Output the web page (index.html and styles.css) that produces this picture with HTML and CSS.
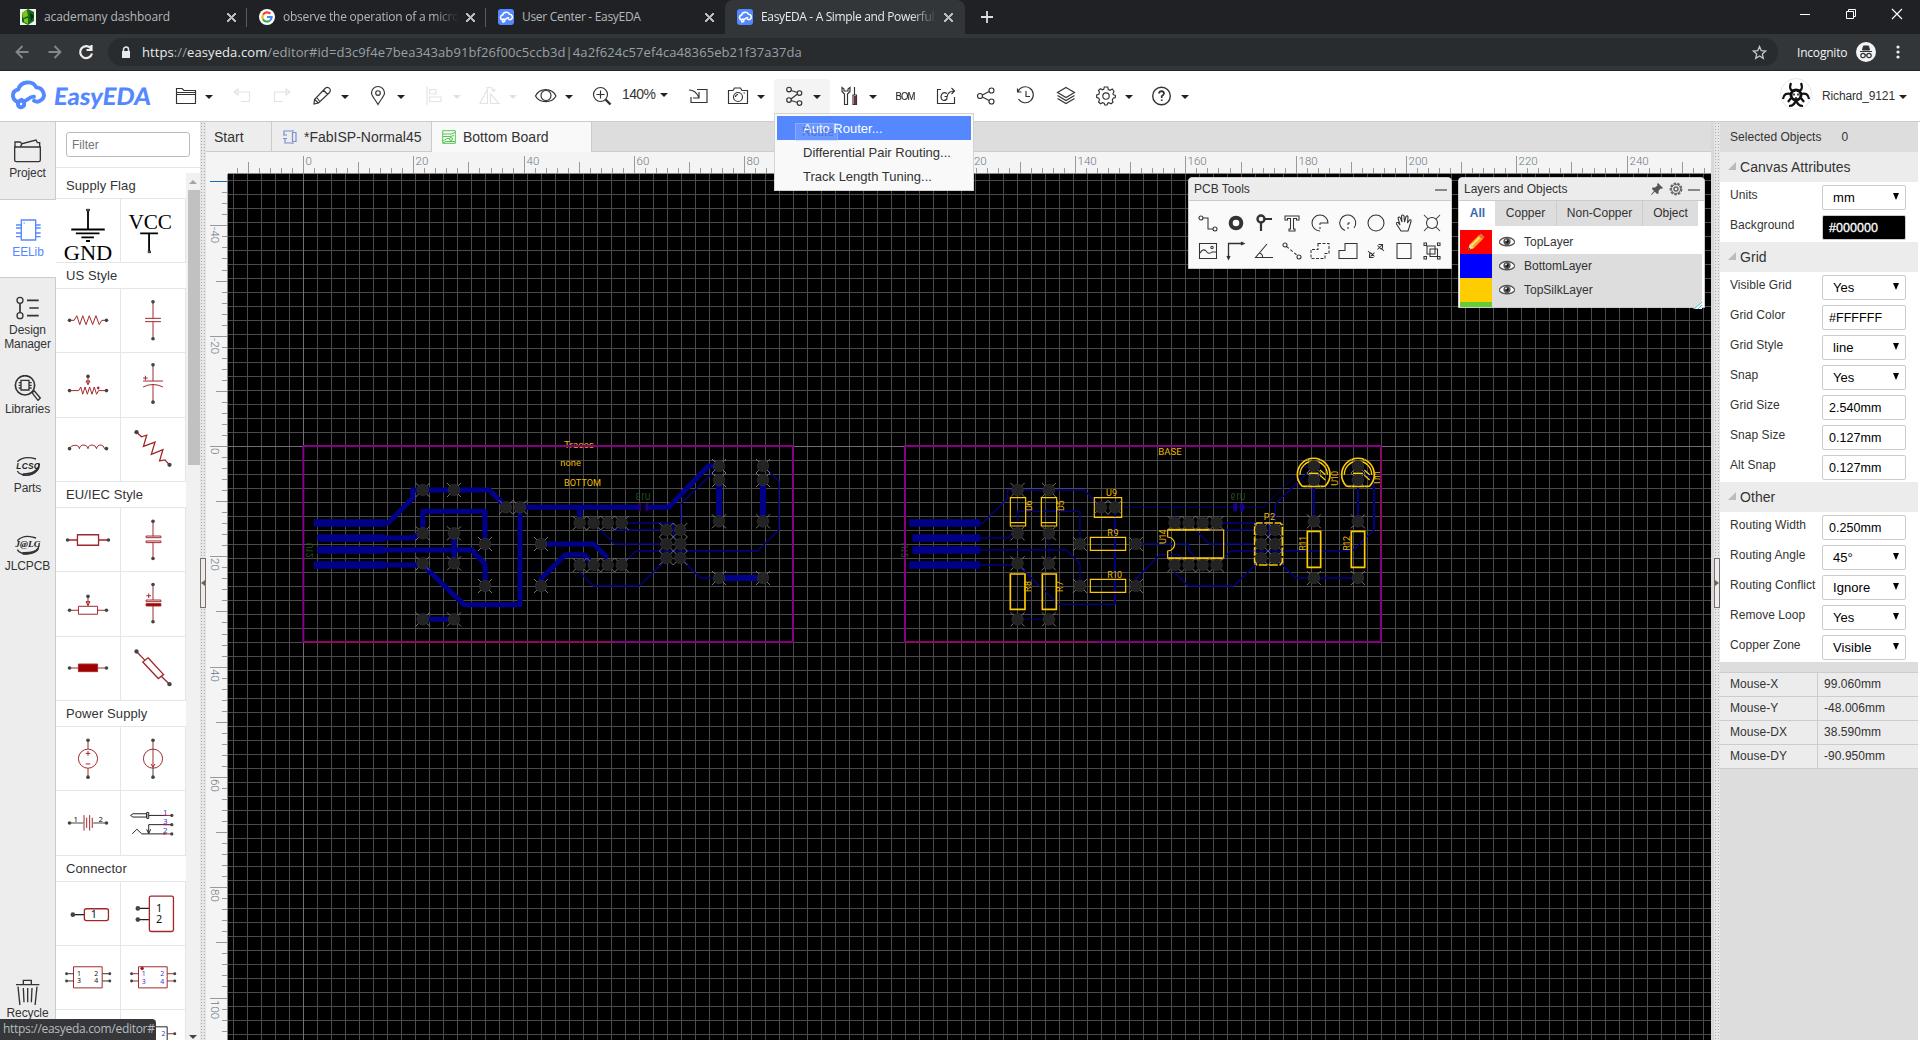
FILE: index.html
```html
<!DOCTYPE html>
<html lang="en">
<head>
<meta charset="utf-8">
<title>EasyEDA - A Simple and Powerful</title>
<link rel="stylesheet" href="styles.css">
</head>
<body>
<svg class="defs" width="0" height="0" aria-hidden="true">
  <defs>
    <g id="pad"><path d="M-21-21 21 21M21-21-21 21" stroke="#777" stroke-width="3"/><circle r="17.500" fill="#232323" stroke="#3a3a3a" stroke-width="1.500"/></g>
    <g id="cloud" fill="none" stroke-linecap="round" stroke-linejoin="round"><path d="M10 22C4 21 2 12 10 10C12 2 24 1 27 8C34 8 37 17 32 20C30 22 27 22 25 21M13 20C7 23 10 28 13 27C17 26 16 21 13 21M15 21C18 22 21 16 25 17"/></g>
    <symbol id="eye" viewBox="0 0 16 12"><path d="M0 6C3 0 13 0 16 6C13 11 3 11 0 6Z" fill="#fff" stroke="#555" stroke-width="1.3"/><circle cx="8" cy="5.6" r="3.6" fill="#555"/><circle cx="8" cy="5.6" r="1.5" fill="#111"/><circle cx="7" cy="4.4" r=".9" fill="#fff"/></symbol>
  </defs>
</svg>

<div class="tabstrip">
  <div class="btab"><svg class="fav" viewBox="0 0 16 16"><path d="M0 0H16V16H0Z" fill="#eef3e8"/><path d="M8 0 14 3V12L8 16 2 13V4Z" fill="#176b1e"/><path d="M2 4 7 1 8 7 3 9ZM4 10 8 9V15L4 13Z" fill="#7fc31c"/><path d="M10 4 14 7 11 12Z" fill="#062b10"/></svg><span class="ttl">academany dashboard</span><i class="x"></i></div>
  <div class="btab"><svg class="fav" viewBox="0 0 16 16"><circle cx="8" cy="8" r="8" fill="#fff"/><g fill="none" stroke-width="2.2"><path d="M11.4 4.8A4.6 4.6 0 0 0 4 5.8" stroke="#ea4335"/><path d="M4 5.8A4.6 4.6 0 0 0 4 10.2" stroke="#fbbc05"/><path d="M4 10.2A4.6 4.6 0 0 0 11 11.5" stroke="#34a853"/><path d="M11 11.5A4.6 4.6 0 0 0 12.6 8H8" stroke="#4285f4"/></g></svg><span class="ttl t2">observe the operation of a micro</span><i class="x"></i></div>
  <div class="btab nosep"><svg class="fav" viewBox="0 0 16 16"><rect width="16" height="16" rx="3" fill="#5588ff"/><g transform="translate(.6 2) scale(.4)" stroke="#fff" stroke-width="4"><use href="#cloud"/></g></svg><span class="ttl t3">User Center - EasyEDA</span><i class="x"></i></div>
  <div class="btab active"><svg class="fav" viewBox="0 0 16 16"><rect width="16" height="16" rx="3" fill="#5588ff"/><g transform="translate(.6 2) scale(.4)" stroke="#fff" stroke-width="4"><use href="#cloud"/></g></svg><span class="ttl t4">EasyEDA - A Simple and Powerful</span><i class="x"></i></div>
  <svg class="plus" viewBox="0 0 14 14"><path d="M7 1V13M1 7H13" stroke="#ddd" stroke-width="1.8"/></svg>
  <div class="wctl">
    <svg viewBox="0 0 12 12"><path d="M1 6.5H11" stroke="#fff"/></svg>
    <svg viewBox="0 0 12 12"><path d="M1.5 3.5H8.5V10.5H1.5ZM3.5 3.5V1.5H10.5V8.5H8.5" fill="none" stroke="#fff"/></svg>
    <svg viewBox="0 0 12 12"><path d="M1 1 11 11M11 1 1 11" stroke="#fff" stroke-width="1.2"/></svg>
  </div>
</div>
<div class="navbar">
  <svg class="navico" width="92" height="20" viewBox="0 0 92 20"><g fill="none" stroke-width="1.8"><path d="M13 10H1M7 4 1 10 7 16" stroke="#85888b"/><path d="M33 10H45M39 4 45 10 39 16" stroke="#85888b"/><path d="M75.500 6.500A6 6 0 1 0 76.500 11.500M76 3V8H71" stroke="#eee" stroke-width="2.200"/></g></svg>
  <div class="omni"><svg width="10" height="13" viewBox="0 0 10 13"><path d="M1 5H9V12H1Z" fill="#e8eaed"/><path d="M2.500 6V3.500A2.500 2.500 0 0 1 7.500 3.500V6" fill="none" stroke="#e8eaed" stroke-width="1.500"/></svg><span class="url"><b>https</b>://<b>easyeda.com</b>/editor#id=d3c9f4e7bea343ab91bf26f00c5ccb3d|4a2f624c57ef4ca48365eb21f37a37da</span>
  <svg class="star" width="15" height="15" viewBox="0 0 15 15"><path d="M7.500 1.500 9.200 5.600 13.700 6 10.300 8.900 11.300 13.300 7.500 11 3.700 13.300 4.700 8.900 1.300 6 5.800 5.600Z" fill="none" stroke="#c4c7ca" stroke-width="1.300"/></svg></div>
  <span class="incog">Incognito</span>
  <svg class="incico" width="20" height="20" viewBox="0 0 20 20"><circle cx="10" cy="10" r="10" fill="#f1f3f4"/><path d="M4 9.500H16M6.500 8 7.500 4H12.500L13.500 8Z" fill="#333" stroke="#333"/><g fill="none" stroke="#333" stroke-width="1.200"><circle cx="7" cy="13.500" r="2.200"/><circle cx="13" cy="13.500" r="2.200"/><path d="M9 13H11"/></g></svg>
  <svg class="dots" width="4" height="14" viewBox="0 0 4 14" fill="#eee"><circle cx="2" cy="2" r="1.600"/><circle cx="2" cy="7" r="1.600"/><circle cx="2" cy="12" r="1.600"/></svg>
</div>

<header class="top">
  <svg class="logo" width="166" height="50" viewBox="0 0 166 50"><g transform="translate(8 8) scale(1.04 1.04)" stroke="#5588ff" stroke-width="3.700"><use href="#cloud"/></g><text transform="translate(53 34) skewX(-7)" textLength="97" lengthAdjust="spacingAndGlyphs" class="logotext">EasyEDA</text></svg>
  <div class="tb drop"><svg viewBox="0 0 24 24"><path d="M2.500 19V4.500H8L10 6.500H21.500V19.500H2.500ZM2.500 8.500H21.500M2.500 10.500H21.500"/></svg></div>
  <div class="tb off"><svg viewBox="0 0 24 24"><path d="M4 8H19.500V17.500H11M8 5V11L4 8Z"/></svg></div>
  <div class="tb off"><svg viewBox="0 0 24 24"><path d="M20 8H4.500V17.500H13M16 5V11L20 8Z"/></svg></div>
  <div class="tb drop"><svg viewBox="0 0 24 24"><path d="M4 20 4.500 15.500 15.500 4Q18 2.500 20 5Q21 7 19.500 8.500L8.500 19ZM13.500 6 17.500 10.500M4.500 15.500 8.500 19M7 14 9.500 17"/></svg></div>
  <div class="tb drop"><svg viewBox="0 0 24 24"><path d="M12 20.500C9 15 5.500 12 5.500 9A6.500 6.500 0 0 1 18.500 9C18.500 12 15 15 12 20.500Z"/><circle cx="12" cy="9" r="2.300"/></svg></div>
  <div class="tb drop off"><svg viewBox="0 0 24 24"><path d="M5 2.500V21M7.500 5.500H14V10H7.500ZM7.500 13H19V17.500H7.500Z"/></svg></div>
  <div class="tb drop off"><svg viewBox="0 0 24 24"><path d="M2 19.500H9.500V5ZM12.500 10 21 19.500H12.500ZM8 4Q14 2 16 7M13.500 6 16 7.500 17.500 5"/></svg></div>
  <div class="tb drop"><svg viewBox="0 0 24 24"><path d="M1.500 12C5.500 3.500 18 3.500 22 12C18 19.500 5.500 19.500 1.500 12Z"/><circle cx="12" cy="11.500" r="5"/></svg></div>
  <div class="tb"><svg viewBox="0 0 24 24"><circle cx="10.500" cy="10.500" r="7"/><path d="M10.500 6.500V14.500M6.500 10.500H14.500"/><path d="M15.500 15.500 20.500 20.500" stroke-width="2.400"/></svg></div>
  <div class="zoom">140%<i class="car"></i></div>
  <div class="tb"><svg viewBox="0 0 24 24"><path d="M11 5.500H21V18.500H5V13M3 6Q10 6 13 14M13 8V14H7"/></svg></div>
  <div class="tb drop"><svg viewBox="0 0 24 24"><path d="M2.500 6.500H7L8.500 4H14.500L16 6.500H21.500V19.500H2.500Z"/><circle cx="12" cy="13" r="4.500"/><path d="M9.500 13A2.500 2.500 0 0 1 12 10.500M17.500 9H19"/></svg></div>
  <div class="tb drop on"><svg viewBox="0 0 24 24"><circle cx="7" cy="5.500" r="2.300"/><circle cx="7" cy="16" r="2.300"/><circle cx="17.500" cy="9" r="2.300"/><circle cx="17.500" cy="19" r="2.300"/><path d="M9 6.500 15.500 8.500M15.500 10 9 15M9 16.500 15.500 18.500"/></svg></div>
  <div class="tb drop"><svg viewBox="0 0 24 24"><path d="M4 3.500V7.500L6.500 10V20.500H9.500V10L12 7.500V3.500L10 5V7H6V5ZM16.500 3V11M15 11H18.500V20.500H15Z"/><path d="M17 12V20" stroke="#703040" stroke-width="2"/></svg></div>
  <div class="tb"><span class="bom">BOM</span></div>
  <div class="tb"><svg viewBox="0 0 24 24"><path d="M7 5.500H3.500V19.500H20.500V13M13 13Q14 7 20 7M17.500 4 20.500 7 17.500 10M13 9.500Q9.500 7.500 7.500 10.500Q6 15 9.500 16.500Q13.500 16.500 13 12.500H10.500"/></svg></div>
  <div class="tb"><svg viewBox="0 0 24 24"><circle cx="6" cy="12" r="2.500"/><circle cx="17.500" cy="6.500" r="2.500"/><circle cx="17.500" cy="17.500" r="2.500"/><path d="M8.500 11 15 7.500M8.500 13 15 16.500"/></svg></div>
  <div class="tb"><svg viewBox="0 0 24 24"><path d="M4 7.500A8 8 0 1 1 4.500 15M3.500 4.500V8H7.500M12 7V12.500H16"/></svg></div>
  <div class="tb"><svg viewBox="0 0 24 24"><path d="M12 3.500 20.500 8.500 12 13.500 3.500 8.500ZM3.500 11.500 12 16.500 20.500 11.500M3.500 14.500 12 19.500 20.500 14.500"/></svg></div>
  <div class="tb drop"><svg viewBox="0 0 24 24"><circle cx="12" cy="12" r="3.200"/><path d="M10.300 3H13.700L14.300 5.500 16 6.300 18.300 5 20 7.500 19 9.500 19.300 10.700 21.300 11.500V13.500L19.200 14.200 18.300 16 19 18.300 17 19.800 14.800 18.700 13.700 19.200 13 21H10.800L10.200 19.200 8.500 18.600 6.500 19.800 4.500 18 5.500 15.800 4.800 14.200 2.700 13.500V11L4.800 10.300 5.500 8.500 4.500 6.500 6.500 4.700 8.500 5.800 9.700 5.300Z"/></svg></div>
  <div class="tb drop"><svg viewBox="0 0 24 24"><circle cx="11.500" cy="12" r="8.800" stroke-width="1.400"/><path d="M9 9.500Q9.200 7.200 11.700 7.200Q14 7.500 14 9.500Q13.500 11 11.700 12.300V14M11.700 15.500V17" stroke-width="1.700"/></svg></div>
  <div class="user"><svg width="32" height="32" viewBox="0 0 32 32"><circle cx="16" cy="16" r="15.500" fill="#fff" stroke="#e8e8e8"/><g fill="none" stroke="#111" stroke-width="2.200"><circle cx="16" cy="17" r="5" stroke-width="3"/><path d="M11 5Q8 13 15 13M21 5Q24 13 17 13M3 21Q4 14 11 16M29 21Q28 14 21 16M9 28Q15 28 16 21M23 28Q17 28 16 21M11 20 8 24M21 20 24 24"/></g><path d="M14 15.500V17.500M18 15.500V17.500M16 19V21" stroke="#111" stroke-width="1.500"/></svg><span>Richard_9121</span><i class="car"></i></div>
  <div class="menu"><div class="mi hot">Auto Router...<span class="ghost">Route</span></div><div class="mi">Differential Pair Routing...</div><div class="mi">Track Length Tuning...</div></div>
</header>

<main class="work">
  <nav class="side">
    <div class="ni first"><svg viewBox="0 90 168 78"><g class="k"><path d="M44 114H121V153Q121 158 116 158H49Q44 158 44 153ZM45 113V99H60L66 104 108 93 112 101H119V113M66 104 62 112"/></g></svg><span>Project</span></div>
    <div class="ni sel"><svg viewBox="0 324 168 78"><g class="k blue"><path d="M64 330H107V390H64ZM48 345H62M48 354H62M48 369H62M48 380H62M109 345H122M109 354H122M109 369H122M109 380H122"/><path d="M71 339H74"/></g></svg><span>EELib</span></div>
    <div class="ni"><svg viewBox="0 560 168 78"><g class="k"><circle cx="60" cy="573" r="9"/><circle cx="60" cy="619" r="9"/><path d="M60 583V609M81 573H116M88 596H116M81 619H116" stroke-width="5"/></g></svg><span>Design<br>Manager</span></div>
    <div class="ni"><svg viewBox="0 795 168 78"><g class="k"><circle cx="75" cy="826" r="29" stroke-width="5"/><path d="M63 811H87V840H63ZM56 818H63M56 826H63M56 834H63M87 818H95M87 826H95M87 834H95"/><path d="M96 848 103 843 121 864 114 871Z"/></g></svg><span>Libraries</span></div>
    <div class="ni"><svg viewBox="0 1032 168 78"><g class="k"><path d="M52 1055Q72 1036 108 1047M52 1083Q60 1097 85 1095Q120 1088 117 1060" /><path d="M70 1096Q112 1098 118 1062Q112 1092 70 1092Z" stroke-width="4"/></g><text x="84" y="1077" class="lg" textLength="70">LCSC</text></svg><span>Parts</span></div>
    <div class="ni"><svg viewBox="0 1267 168 78"><g class="k"><path d="M52 1293Q72 1272 108 1285M52 1320Q60 1334 85 1332Q118 1326 118 1300"/><path d="M70 1333Q108 1335 116 1316Q104 1330 70 1329Z" stroke-width="4"/></g><text x="83" y="1313" class="lg ser" textLength="74" lengthAdjust="spacingAndGlyphs">J@LC</text></svg><span>JLCPCB</span></div>
    <div class="ni last"><svg viewBox="0 1195 168 78"><g class="k" stroke-width="5"><path d="M48 1212H118M70 1211V1199H94V1211M54 1218 60 1276H105L111 1218M70 1222 72 1265M83 1222V1265M96 1222 94 1265"/></g></svg><span>Recycle</span></div>
  </nav>

  <section class="lib">
    <div class="filter"><div class="inp">Filter</div></div>
    <div class="scroll">
      <div class="list">
        <h4>Supply Flag</h4>
        <div class="cells">
          <svg viewBox="168 267 192 192"><path d="M264 300V360M213 360H315M227 372H299M244 384H282M258 395H270" stroke="#000" stroke-width="5.500"/><path d="M258 297H270V304H258Z" fill="#444"/><text x="190" y="452" textLength="148" lengthAdjust="spacingAndGlyphs" class="ser" font-size="64">GND</text></svg>
          <svg viewBox="363 267 192 192"><text x="384" y="357" textLength="133" lengthAdjust="spacingAndGlyphs" class="ser" font-size="62">VCC</text><path d="M420 372H474M447 372V430" stroke="#000" stroke-width="5.500"/><path d="M443 424H453V432H443Z" fill="#444"/></svg>
        </div>
        <h4>US Style</h4>
        <div class="cells c3">
          <svg viewBox="168 541 192 192"><g class="r"><path d="M208 636H222L230 622 239 649 248 622 258 649 268 622 278 649 288 622 298 649 306 636H320"/></g><g class="d"><circle cx="208" cy="636" r="5.500"/><circle cx="320" cy="636" r="5.500"/></g></svg>
          <svg viewBox="363 541 192 192"><g class="r"><path d="M459 580V630M435 630H483M435 640H483M459 640V692"/></g><g class="d"><circle cx="459" cy="580" r="5.500"/><circle cx="459" cy="692" r="5.500"/></g></svg>
          <svg viewBox="168 735 192 192"><g class="r"><path d="M208 849H236L242 838 248 860 255 838 262 860 269 838 276 860 283 838 290 860 296 849H320M264 806V830M258 820 264 831 270 820Z"/><circle cx="295" cy="841" r="3" fill="#e00"/></g><g class="d"><circle cx="208" cy="849" r="5.500"/><circle cx="320" cy="849" r="5.500"/><circle cx="264" cy="806" r="5.500"/></g></svg>
          <svg viewBox="363 735 192 192"><g class="r"><path d="M459 771V820M429 820H489M429 838Q459 823 489 838M459 832V884M429 811H443M436 804V818"/></g><g class="d"><circle cx="459" cy="771" r="5.500"/><circle cx="459" cy="884" r="5.500"/></g></svg>
          <svg viewBox="168 927 192 192"><g class="r"><path d="M208 1020Q213 1010 222 1010Q236 1008 238 1020Q240 1008 252 1009Q262 1010 264 1020Q266 1008 278 1009Q288 1010 290 1020Q292 1008 304 1009Q312 1010 314 1020H320"/></g><g class="d"><circle cx="208" cy="1020" r="5.500"/><circle cx="320" cy="1020" r="5.500"/></g></svg>
          <svg viewBox="363 927 192 192"><g class="r"><path stroke-width="4" d="M409 970 424 984 440 979 430 1013 465 1000 454 1037 489 1023 479 1057 495 1054 509 1069"/></g><g class="d"><circle cx="409" cy="970" r="6.500"/><circle cx="509" cy="1069" r="6.500"/></g></svg>
        </div>
        <h4>EU/IEC Style</h4>
        <div class="cells c3">
          <svg viewBox="168 1196 192 192"><g class="r"><path d="M202 1293H232M232 1277H296V1309H232ZM296 1293H326" stroke-width="4"/></g><g class="d"><circle cx="202" cy="1293" r="5.500"/><circle cx="326" cy="1293" r="5.500"/></g></svg>
          <svg viewBox="363 1196 192 192"><g class="r"><path d="M459 1236V1282M438 1281H483V1286H438ZM438 1296H483V1301H438ZM459 1300V1349"/></g><g class="d"><circle cx="459" cy="1236" r="5.500"/><circle cx="459" cy="1349" r="5.500"/></g></svg>
          <svg viewBox="168 -20 192 192"><g class="r"><path d="M208 96H235M235 84H293V108H235ZM293 96H320" /><path d="M264 54V82M258 70 264 82 270 70Z"/></g><g class="d"><circle cx="208" cy="96" r="5.500"/><circle cx="320" cy="96" r="5.500"/><circle cx="264" cy="54" r="5.500"/></g></svg>
          <svg viewBox="363 -20 192 192"><g class="r"><path d="M459 18V65M438 65H483V70H438ZM459 82V131M439 52H453M446 45V59"/><path d="M438 76H483V83H438Z" fill="#a00000"/></g><g class="d"><circle cx="459" cy="18" r="5.500"/><circle cx="459" cy="131" r="5.500"/></g></svg>
          <svg viewBox="168 173 192 192"><g class="r"><path d="M208 267H320"/><path d="M235 255H293V278H235Z" fill="#a00000"/></g><g class="d"><circle cx="208" cy="267" r="5.500"/><circle cx="320" cy="267" r="5.500"/></g></svg>
          <svg viewBox="363 173 192 192"><g class="r"><path stroke-width="4" d="M409 217 434 243M444 236 491 287 475 299 428 249ZM484 292 509 316"/></g><g class="d"><circle cx="409" cy="217" r="6.500"/><circle cx="509" cy="316" r="6.500"/></g></svg>
        </div>
        <h4>Power Supply</h4>
        <div class="cells c3">
          <svg viewBox="168 444 192 192"><g class="r"><circle cx="264" cy="540" r="29"/><path d="M264 484V510M264 569V596M257 524H271M264 517V531M257 556H271"/></g><g class="d"><circle cx="264" cy="484" r="5.500"/><circle cx="264" cy="596" r="5.500"/></g></svg>
          <svg viewBox="363 444 192 192"><g class="r"><circle cx="459" cy="540" r="29"/><path d="M459 484V568M453 556 459 566 465 556"/></g><path d="M459 569V596" stroke="#444" stroke-width="3"/><g class="d"><circle cx="459" cy="484" r="5.500"/><circle cx="459" cy="596" r="5.500"/></g></svg>
          <svg viewBox="168 638 192 192"><path d="M208 735H250M280 735H320" stroke="#444" stroke-width="3"/><g class="r"><path d="M252 711V758M260 719V750M269 711V758M277 719V750"/></g><g class="d"><circle cx="208" cy="735" r="5.500"/><circle cx="320" cy="735" r="5.500"/></g><g class="n"><text x="220" y="731">1</text><text x="296" y="731">2</text></g></svg>
          <svg viewBox="363 638 192 192"><path d="M391 712 398 707H440V717H398ZM440 703H446V721H440ZM446 712H500M516 740H446V766M440 754 446 767 452 754M396 768 410 754 425 768H500" fill="none" stroke="#222" stroke-width="3"/><path d="M490 712H516M490 740H516M490 768H516" stroke="#a23" stroke-width="3"/><g class="d"><circle cx="516" cy="712" r="5"/><circle cx="516" cy="740" r="5"/><circle cx="516" cy="768" r="5"/></g><g class="n bl"><text x="489" y="710">1</text><text x="489" y="737">3</text><text x="489" y="765">2</text></g></svg>
        </div>
        <h4>Connector</h4>
        <div class="cells c3">
          <svg viewBox="168 908 192 192"><path d="M218 1007H252" stroke="#222" stroke-width="4"/><g class="r"><rect x="253" y="989" width="73" height="36" rx="6" stroke-width="4"/></g><g class="d"><circle cx="218" cy="1007" r="7"/></g><g class="n"><text x="272" y="1017" class="big">1</text></g></svg>
          <svg viewBox="363 908 192 192"><path d="M413 988H448M413 1022H448" stroke="#222" stroke-width="4"/><g class="r"><rect x="448" y="951" width="73" height="107" rx="5" stroke-width="4"/></g><g class="d"><circle cx="413" cy="988" r="7"/><circle cx="413" cy="1022" r="7"/></g><g class="n"><text x="468" y="999" class="big">1</text><text x="468" y="1032" class="big">2</text></g></svg>
          <svg viewBox="168 1102 192 192"><path d="M199 1186H220M199 1208H220M307 1186H330M307 1208H330" stroke="#333" stroke-width="3"/><g class="r"><path d="M220 1165H307V1229H220Z"/></g><g class="d"><circle cx="199" cy="1186" r="4.500"/><circle cx="199" cy="1208" r="4.500"/><circle cx="330" cy="1186" r="4.500"/><circle cx="330" cy="1208" r="4.500"/></g><g class="n sm"><text x="231" y="1194">1</text><text x="283" y="1194">2</text><text x="231" y="1215">3</text><text x="283" y="1215">4</text></g></svg>
          <svg viewBox="363 1102 192 192"><g class="r"><path d="M394 1186H415M394 1208H415M502 1186H525M502 1208H525M415 1165H502V1229H415Z"/><circle cx="426" cy="1170" r="4" fill="#a00"/></g><g class="d"><circle cx="394" cy="1186" r="4.500"/><circle cx="394" cy="1208" r="4.500"/><circle cx="525" cy="1186" r="4.500"/><circle cx="525" cy="1208" r="4.500"/></g><g class="n sm bl"><text x="425" y="1194">1</text><text x="481" y="1194">2</text><text x="425" y="1218">3</text><text x="481" y="1218">4</text></g></svg>
          <svg viewBox="168 1294 192 192"></svg>
          <svg viewBox="363 1294 192 192"><path d="M415 1345H502V1420H415Z" fill="none" stroke="#222" stroke-width="3"/><g class="r"><path d="M502 1366H525"/></g><g class="d"><circle cx="525" cy="1366" r="4.500"/></g><g class="n sm bl"><text x="485" y="1374">2</text></g></svg>
        </div>
      </div>
      <div class="sbar"><i class="up"></i><i class="thumb"></i><i class="dn"></i></div>
    </div>
  </section>
  <div class="split"><div class="grip"><i></i></div></div>

  <section class="center">
    <div class="tabs">
      <div class="tab start">Start</div>
      <div class="tab"><svg width="14" height="16" viewBox="0 0 14 16"><path d="M1 4V2H10V1M1 6V2.500M0 6H4M0 9.500H4M2 9.500V14H10V15M9.500 3.500H13V12.500H9.500Z" fill="none" stroke="#7b8fd0" stroke-width="1.200"/></svg>*FabISP-Normal45</div>
      <div class="tab cur"><svg width="14" height="14" viewBox="0 0 14 14"><path d="M.7.700H13.300V13.300H.7ZM1 4H9L13 2.500M1 6.500H8L12 5.500M1 11 5 8.500H7M1 13 4 11.500H13" fill="none" stroke="#56c552" stroke-width="1"/><circle cx="9" cy="9" r="1.500" fill="none" stroke="#56c552" stroke-width="1"/></svg>Bottom Board</div>
    </div>
    <svg class="board" width="1505" height="888" viewBox="206 152 1505 888">
      <rect x="206" y="152" width="1505" height="888" fill="#f4f4f4"/>
      <rect x="228" y="174" width="1483" height="866" fill="#000"/>
      <g id="grid" shape-rendering="crispEdges"></g>
      <g id="ruler"></g>
      <path d="M210 181.500H228" stroke="#1b6cb5"/>
      <path d="M227.500 174V1040M228 173.500H1711" stroke="#888"/>
      <g transform="translate(290 430) scale(.33333)">
        <g class="cu">
          <path d="M72 279H285M82 324H285M82 360H285M72 405H285" stroke-width="23"/>
          <path d="M285 279H294L368 205V180H398M398 180H598L648 230M285 324H368L390 310M398 310V244H585V342M285 360H545L585 402V468M285 405H398L522 524H690V232M690 232H1136L1255 108H1287M869 232V279" stroke-width="15"/>
          <path d="M492 310V400M398 568H492M753 342H911L953 384M753 460V446L826 374H880L905 398" stroke-width="15"/>
          <path d="M1287 150V274M1419 150V274M1287 444H1419" stroke-width="18"/>
          <path d="M995 279H1150V300M950 280 974 300H1129M911 279 974 342H1129M995 405 1038 363H1403L1467 299V154L1419 108M869 427 910 468H1047L1129 388M1171 384 1231 444H1287M1172 290V222L1287 110M1150 300V320L1171 345" stroke-width="4"/>
        </g>
        <path d="M1045 220H1053V244H1045ZM1067 220H1075V244H1067Z" fill="#2a0070"/>
        <path d="M1056 220V244M1062 220V244" stroke="#000" stroke-width="5"/>
        <g class="pads"></g>
        <g class="silk"><text x="822" y="53" textLength="90" lengthAdjust="spacingAndGlyphs">Traces</text><text x="811" y="107" textLength="62" lengthAdjust="spacingAndGlyphs">none</text><text x="822" y="167" textLength="111" lengthAdjust="spacingAndGlyphs">BOTTOM</text></g>
        <g class="gsilk"><text transform="translate(1081 210) scale(-1 1)" textLength="44" lengthAdjust="spacingAndGlyphs">U13</text><text transform="translate(70 339) scale(-1 1) rotate(90)" textLength="44" lengthAdjust="spacingAndGlyphs">U12</text></g>
        <path d="M40 48H1509V636H40Z" class="edge"/>
        <path d="M46 637H976" stroke="#99152b" stroke-width="4" stroke-dasharray="10 5"/>
      </g>
      <g transform="translate(890 430) scale(.33333)">
        <g class="cu">
          <path d="M58 279H270M67 324H270M67 360H270M58 405H270" stroke-width="23"/>
          <path d="M383 180H477M270 324H354L368 310M270 405H383" stroke-width="5"/>
          <path d="M270 279H278L353 205V180H383M477 180H582L633 232M270 360H530L570 402V468M383 310V244H570V342M383 405 506 523H675V232M738 342H896V360L937 405M738 460V446L810 374H865L895 400M979 279H1136V300M930 280 958 300H1114M895 279 958 342H1114M979 405 1022 363H1388L1452 299V154L1404 108M853 427 894 468H1031L1114 388M1156 384 1217 444H1404M1156 300V222L1271 110M1136 300V320L1156 350" stroke-width="4"/>
          <path d="M675 232H1120L1245 108H1271M853 232V279M477 310V400M383 568H477" stroke-width="2.500"/>
          <path d="M1271 150V274M1404 150V274M675 245V523M1452 154V299" stroke-width="6"/>
        </g>
        <path d="M1030 220H1041V244H1030ZM1050 220H1058Q1070 232 1058 244H1050Z" fill="#1a0090"/>
        <g class="yl" >
          <path d="M361 203H407V288H361ZM361 278H407M454 203H500V288H454ZM454 278H500M613 203H695V262H613ZM601 322H707V361H601ZM601 448H707V487H601Z"/>
          <path d="M361 432H405V538H361ZM457 432H499V538H457ZM1252 304H1292V412H1252ZM1384 304H1424V412H1384Z" stroke-width="5"/>
          <path d="M833 300H1001V384H833V363A21 21 0 0 0 833 321Z"/><path d="M833 299H960M833 385H1000" stroke-width="5"/>
          <path d="M1094 285 1101 279H1171L1177 285V397L1170 405H1101L1094 397Z" stroke-width="5" stroke-dasharray="26 5"/>
          <path d="M1236 168A49 49 0 1 1 1306 168L1300 169H1242ZM1369 168A49 49 0 1 1 1439 168L1433 169H1375Z" stroke-width="5"/>
          <path d="M1230 134A41 41 0 0 1 1312 134M1363 134A41 41 0 0 1 1445 134M1258 130H1284M1391 130H1417M1290 120 1306 134M1290 136 1306 150M1423 120 1439 134M1423 136 1439 150" stroke-width="4"/>
        </g>
        <g class="pads" transform="translate(-15.300 0)"></g>
        <path class="yl" d="M1256 130H1286M1389 130H1419" stroke-width="4"/>
        <g class="silk"><text x="805" y="75" textLength="70" lengthAdjust="spacingAndGlyphs">BASE</text><text x="648" y="198" textLength="33">U9</text><text x="652" y="318" textLength="34">R9</text><text x="652" y="444" textLength="44">R10</text><text x="1121" y="271" textLength="34">P2</text>
          <text transform="translate(427 243) rotate(-90)" textLength="32">D6</text><text transform="translate(521 243) rotate(-90)" textLength="32">D5</text><text transform="translate(424 486) rotate(-90)" textLength="33">R8</text><text transform="translate(518 486) rotate(-90)" textLength="33">R7</text><text transform="translate(828 342) rotate(-90)" textLength="44">U14</text><text transform="translate(1248 362) rotate(-90)" textLength="44">R11</text><text transform="translate(1380 362) rotate(-90)" textLength="44">R12</text><text transform="translate(1345 167) rotate(-90)" textLength="44">U10</text><text transform="translate(1474 161) rotate(-90)" textLength="40">U11</text></g>
        <g class="gsilk"><text transform="translate(1066 210) scale(-1 1)" textLength="44" lengthAdjust="spacingAndGlyphs">U19</text><text transform="translate(55 339) scale(-1 1) rotate(90)" textLength="44" lengthAdjust="spacingAndGlyphs">U12</text></g>
        <path d="M45 48H1473V636H45Z" class="edge"/>
        <path d="M48 637H610M1472 60V360" stroke="#99152b" stroke-width="4" stroke-dasharray="9 6"/>
      </g>
    </svg>

    <div class="dlg tools">
      <div class="dh"><span>PCB Tools</span><i class="min"></i></div>
      <div class="tg">
        <svg viewBox="0 0 20 20"><circle cx="3" cy="5" r="2"/><circle cx="17" cy="16" r="2"/><path d="M5 5H10V16H15"/></svg>
        <svg viewBox="0 0 20 20"><circle cx="10" cy="10" r="5.300" stroke-width="4"/></svg>
        <svg viewBox="0 0 20 20"><circle cx="7" cy="6" r="3.500" stroke-width="2.400"/><path d="M7 9V18M11 6H18" stroke-width="2.200"/></svg>
        <svg viewBox="0 0 20 20"><path d="M3 3H17V7H14.500V5.500H11.500V16H13V18H7V16H8.500V5.500H5.500V7H3Z"/></svg>
        <svg viewBox="0 0 20 20"><path d="M10 18A8 8 0 1 1 18 10H10" /><path d="M10 10V18" stroke-dasharray="2 2"/></svg>
        <svg viewBox="0 0 20 20"><path d="M7 17.500A8 8 0 1 1 16 15"/><path d="M10 10V18M10 10H13" stroke-dasharray="2 2"/></svg>
        <svg viewBox="0 0 20 20"><circle cx="10" cy="10" r="8"/></svg>
        <svg viewBox="0 0 20 20"><path d="M7 18 2.500 11Q2 9 4 9.500L6 12 4 5Q5 3 6.500 5L8 9 7.500 3Q8.500 1 10 3L10.500 9 12 3.500Q13.500 2 14 4L13.500 10 15.500 7Q17.500 6 17 8.500L15 15 14 18Z"/></svg>
        <svg viewBox="0 0 20 20"><circle cx="10" cy="10" r="5.500"/><path d="M2 2 6 6M18 2 14 6M2 18 6 14M18 18 14 14"/></svg>
        <svg viewBox="0 0 20 20"><path d="M1.500 2.500H18.500V17.500H1.500ZM2 12Q5 7 8 10Q11 14 14 11L18 11"/><circle cx="14" cy="6.500" r="1.200"/></svg>
        <svg viewBox="0 0 20 20"><path d="M2.500 18V2.500H18M15 1 18 2.500 15 4M1 15 2.500 18 4 15" stroke-width="1.300"/></svg>
        <svg viewBox="0 0 20 20"><path d="M13 3 1.500 16.500H19M5.500 12Q9 13 8.500 16.500"/></svg>
        <svg viewBox="0 0 20 20"><circle cx="3" cy="4" r="2"/><circle cx="17" cy="16" r="2"/><path d="M4.500 5.500 15.500 14.500" stroke-dasharray="3 2"/></svg>
        <svg viewBox="0 0 20 20"><path d="M8 2.500H19V12.500H15V17.500H1V8.500H8Z" stroke-dasharray="3 1.500"/></svg>
        <svg viewBox="0 0 20 20"><path d="M7 2.500H19V17.500H1V9.500H7Z"/></svg>
        <svg viewBox="0 0 20 20"><path d="M4.500 15.500 8.500 11.500M11.500 8.500 16 4M11.500 4.500 15.500 8.500M12.500 3.500H16.500V7.500M4.500 11.500 8.500 15.500M3.500 12.500V16.500H7.500M2 10 5 13M15 7 18 10"/></svg>
        <svg viewBox="0 0 20 20"><path d="M3 2.500H17V17.500H3Z"/></svg>
        <svg viewBox="0 0 20 20"><path d="M5 5H13V13H5ZM8 8H15.500V15.500H8Z"/><path d="M2 2H4.500V4.500H2ZM15.500 2H18V4.500H15.500ZM2 15.500H4.500V18H2ZM15.500 15.500H18V18H15.500Z"/></svg>
      </div>
    </div>

    <div class="dlg layers">
      <div class="dh"><span>Layers and Objects</span><svg width="14" height="14" viewBox="0 0 14 14"><path d="M8 1 13 6 11.500 7 10.500 6.500 8.500 9 8.500 11.500 7 12 4.800 9.800 1.500 13 1 12.500 4 9 2 7 2.500 5.500 5 5.500 7.500 3.500 7 2Z" fill="#555"/></svg><svg class="gr" width="14" height="14" viewBox="0 0 14 14" fill="none" stroke="#666"><circle cx="7" cy="7" r="5.500" stroke-width="1.800" stroke-dasharray="2.600 1.200"/><circle cx="7" cy="7" r="4.500"/><circle cx="7" cy="7" r="2" stroke-width="1.500"/></svg><i class="min"></i></div>
      <div class="lt"><b>All</b><span>Copper</span><span>Non-Copper</span><span>Object</span></div>
      <div class="lr w"><i class="red"><svg width="18" height="18" viewBox="0 0 18 18"><path d="M1 17 3 11 12 2 16 6 7 15Z" fill="#f6a21c"/><path d="M4.500 12.500 12.500 4.500" stroke="#ffe27a" stroke-width="2"/><path d="M12 2 14 .5 17.500 4 16 6Z" fill="#e26a5a"/><path d="M1 17 3 11 7 15Z" fill="#f5d9a8"/><path d="M1 17 2 14.500 3.500 16Z" fill="#222"/></svg></i><svg class="ey"><use href="#eye"/></svg>TopLayer</div>
      <div class="lr"><i class="blu"></i><svg class="ey"><use href="#eye"/></svg>BottomLayer</div>
      <div class="lr"><i class="yel"></i><svg class="ey"><use href="#eye"/></svg>TopSilkLayer</div>
      <div class="lr part"><i class="grn"></i><svg class="rz" width="10" height="8" viewBox="0 0 10 8"><path d="M10 0V8H1Z" fill="#e6ffff"/><path d="M2 8 10 1M6 8 10 4" stroke="#6aa"/></svg></div>
    </div>
  </section>
  <div class="split right"><div class="grip"><i></i></div></div>

  <aside class="props">
    <div class="so"><span>Selected Objects</span><span>0</span></div>
    <h3>Canvas Attributes</h3>
    <div class="pr"><label>Units</label><div class="f s">mm</div></div>
    <div class="pr"><label>Background</label><div class="f blk">#000000</div></div>
    <h3>Grid</h3>
    <div class="pr"><label>Visible Grid</label><div class="f s">Yes</div></div>
    <div class="pr"><label>Grid Color</label><div class="f">#FFFFFF</div></div>
    <div class="pr"><label>Grid Style</label><div class="f s">line</div></div>
    <div class="pr"><label>Snap</label><div class="f s">Yes</div></div>
    <div class="pr"><label>Grid Size</label><div class="f">2.540mm</div></div>
    <div class="pr"><label>Snap Size</label><div class="f">0.127mm</div></div>
    <div class="pr"><label>Alt Snap</label><div class="f">0.127mm</div></div>
    <h3>Other</h3>
    <div class="pr"><label>Routing Width</label><div class="f">0.250mm</div></div>
    <div class="pr"><label>Routing Angle</label><div class="f s">45°</div></div>
    <div class="pr"><label>Routing Conflict</label><div class="f s">Ignore</div></div>
    <div class="pr"><label>Remove Loop</label><div class="f s">Yes</div></div>
    <div class="pr"><label>Copper Zone</label><div class="f s">Visible</div></div>
    <div class="mouse">
      <div><span>Mouse-X</span><span>99.060mm</span></div>
      <div><span>Mouse-Y</span><span>-48.006mm</span></div>
      <div><span>Mouse-DX</span><span>38.590mm</span></div>
      <div><span>Mouse-DY</span><span>-90.950mm</span></div>
    </div>
  </aside>
</main>
<div class="status">https://easyeda.com/editor#</div>
<script src="board.js"></script>
</body>
</html>
```
FILE: styles.css
```css
*{box-sizing:border-box}
body{margin:0;width:1920px;height:1040px;overflow:hidden;position:relative;font:12px "Liberation Sans",Arial,sans-serif;color:#333;background:#fff;display:flex;flex-direction:column}
.defs{position:absolute}
svg{display:block;flex:none}
i{font-style:normal}

/* browser window */
.tabstrip{height:34px;flex:none;background:#202124;display:flex;align-items:center;padding-left:8px;font:12px "Open Sans","Noto Sans",sans-serif;color:#9aa0a6}
.btab{width:239px;height:34px;display:flex;align-items:center;padding-left:12px;position:relative;color:#b5b8bb}
.btab:not(.nosep):not(.active)::after{content:"";position:absolute;right:0;top:8px;width:1px;height:19px;background:#5a5d60}
.btab.active{background:#323639;border-radius:8px 8px 0 0;width:240px;color:#e8eaed}
.fav{width:16px;height:16px}
.ttl{width:178px;margin-left:8px;white-space:nowrap;overflow:hidden;line-height:20px;letter-spacing:-.1px}
.t2,.t4{width:176px;margin-right:2px;-webkit-mask-image:linear-gradient(90deg,#000 150px,transparent);letter-spacing:-.22px}
.t4{letter-spacing:-.35px}.t3{letter-spacing:-.3px}
.x{width:9px;height:9px;margin-left:5px;background:linear-gradient(45deg,transparent 44%,#bbb 44%,#bbb 56%,transparent 56%),linear-gradient(-45deg,transparent 44%,#bbb 44%,#bbb 56%,transparent 56%)}
.plus{width:14px;height:14px;margin-left:15px}
.wctl{margin-left:auto;display:flex;gap:34px;padding:0 17px 6px 0}
.wctl svg{width:12px;height:12px}
.navbar{height:37px;flex:none;background:#323639;border-bottom:1px solid #222428;display:flex;align-items:center;padding-left:15px;font:12px "Open Sans","Noto Sans",sans-serif}
.navico{width:93px}
.omni{width:1670px;height:28px;border-radius:14px;background:#282c2f;display:flex;align-items:center;padding:0 11px 0 13px;color:#9aa0a6}
.url{margin-left:11px;font-size:13px;letter-spacing:.09px;white-space:nowrap}
.url b{font-weight:400;color:#e8eaed}
.star{margin-left:auto}
.incog{margin-left:19px;width:58px;color:#f1f3f4;font-size:12px;letter-spacing:-.2px}
.dots{margin-left:31px}
.incog+.incico{margin-left:1px}
.incico+.dots{margin-left:20px}

/* application header */
.top{height:51px;flex:none;display:flex;position:relative;border-bottom:1px solid #ccc;background:#fff}
.logotext{font:900 24px Lato,sans-serif;fill:#5588ff}
.tb{width:40px;height:50px;display:flex;align-items:center;padding-left:8px;position:relative}
.tb svg{width:24px;height:24px;fill:none;stroke:#333;stroke-width:1.15}
.tb.drop{width:56px}
.tb.off{opacity:.13}
.tb.drop::after,.car{content:"";border:4px solid transparent;border-top:4px solid #222;border-bottom:0;margin-left:7px;margin-top:1px}
.tb.on::before{content:"";position:absolute;left:0;top:8px;width:56px;height:34px;background:#f4f4f4;border-radius:3px 3px 0 0}
.tb.on svg,.tb.on::after{position:relative}
.bom{font-size:10px;margin-left:1px;letter-spacing:-.9px;color:#222;transform:scaleX(.95);-webkit-text-stroke:.1px #222}
.zoom{width:56px;display:flex;align-items:center;font-size:14px;letter-spacing:-.6px;padding-bottom:4px;color:#333}
.zoom .car{margin-left:5px}
.user{margin-left:auto;display:flex;align-items:center;width:140px;font-size:12px;letter-spacing:-.15px}
.user svg{margin:-4px 10px 0 0}
.user .car{margin:2px 0 0 4px}
.menu{position:absolute;left:774px;top:42px;width:200px;height:78px;border:1px solid #d3d3d3;background:#f9f9f9;padding:2px;z-index:5}
.mi{height:24px;line-height:25px;padding-left:26px;font-size:13px;letter-spacing:0;position:relative;color:#333}
.mi.hot{background:#5588ff;color:#fff;line-height:25px}
.ghost{position:absolute;left:18px;top:7px;width:43px;height:18px;line-height:17px;padding-left:6px;border:1px solid rgba(180,200,255,.45);background:rgba(255,255,255,.12);color:rgba(30,60,160,.4);font-size:12px}

/* workspace */
.work{display:flex;height:918px;flex:none}
.side{width:56px;background:#ededed;border-right:1px solid #ccc;display:flex;flex-direction:column}
.ni{height:78.700px;padding-top:18px;text-align:center;line-height:14px;flex:none;letter-spacing:-.1px}
.ni svg{width:56px;height:26px;margin-bottom:1px}
.ni.first{height:77px;padding-top:17px}
.ni.sel{background:#fff;border:solid #ccc;border-width:1px 0;width:56px;color:#5588ff;padding-top:18px;height:79.300px}
.ni.last{margin-top:auto;margin-right:0}
.k{fill:none;stroke:#333;stroke-width:4}
.k.blue{stroke:#5588ff}
.lg{font:italic bold 25px "Liberation Sans";text-anchor:middle;fill:#222}
.lg.ser{font-family:"Liberation Serif"}
.lib{width:144px;background:#fff;display:flex;flex-direction:column}
.filter{height:46px;border-bottom:1px solid #e5e5e5;padding:10px;flex:none}
.inp{height:25px;width:124px;border:1px solid #bbb;border-radius:3px;padding-left:5px;line-height:24px;color:#757575}
.scroll{flex:1;display:flex;padding-top:5px;min-height:0}
.list{width:130px;overflow:hidden}
.list h4{margin:0;height:25px;line-height:25px;padding-left:10px;font-weight:400;font-size:13px;letter-spacing:.1px}
.cells{display:grid;grid-template-columns:65px 65px;grid-auto-rows:64px;border-top:1px solid #e6e6e6}
.cells.c3{grid-auto-rows:64.330px}
.cells svg{width:65px;height:64px;padding-right:0;border-right:1px solid #e6e6e6;border-bottom:1px solid #e6e6e6}
.cells.c3 svg{height:64.330px}
.ser{font-family:"Liberation Serif",serif}
.r{fill:none;stroke:#a0282c;stroke-width:3}
.d{fill:#444}
.n{font-family:"Noto Sans",sans-serif;font-size:24px;fill:#111}
.n .big{font-size:33px}
.n.sm{font-size:21px}
.bl{fill:#3a3ae0}
.sbar{width:14px;background:#f1f1f1;padding:0 0 0 2px;display:flex;flex-direction:column;align-items:center}
.up{border:4px solid transparent;border-bottom:4px solid #a3a3a3;border-top:0;margin:7px 2px 6px 0}
.thumb{width:12px;height:275px;background:#c1c1c1}
.dn{border:4px solid transparent;border-top:4px solid #444;border-bottom:0;margin:auto 2px 1px 0}
.split{width:6px;background:#e6e6e6 radial-gradient(circle,#aaa .7px,transparent .9px) 0 0/3px 3px;padding-top:436px}
.grip{height:50px;border:1px solid #7a6d6d;background:#f0eaea;padding-top:21px;width:6px}
.grip i{display:block;border:3.500px solid transparent;border-right:4px solid #665;border-left:0;width:0}
.split.right{width:9px;border-left:3px solid #d8d8d8}
.split.right .grip i{border-left:4px solid #665;border-right:0}
.center{width:1505px;position:relative;display:flex;flex-direction:column}
.tabs{height:30px;background:#ddd;border-bottom:1px solid #ccc;display:flex;flex:none}
.tab{width:160px;background:#ededed;border-right:1px solid #ccc;display:flex;align-items:center;padding-left:11px;font-size:14px;letter-spacing:0;white-space:nowrap}
.tab svg{margin-right:7px}
.tab.start{width:66px;padding-left:8px}
.tab.cur{background:#f9f9f9;padding-left:10px;height:30px}
.board{flex:none}
.cu{fill:none;stroke:#000088;stroke-linejoin:round}
.edge{fill:none;stroke:#880088;stroke-width:6}
.yl{fill:none;stroke:#ffcc00;stroke-width:3.500}
.silk text{font:27px Roboto,sans-serif;fill:#eabb00}
.gsilk text{font:28px Roboto,sans-serif;fill:#24591a}
#ruler text{font:300 11.500px Roboto,sans-serif;fill:#6b7885}
#ruler path{stroke:#999;fill:none}
#grid path{stroke:#4b4b4b;fill:none}

/* floating panels */
.dlg{position:absolute;top:55px;background:#fafafa;border:1px solid #ccc;border-radius:4px 4px 0 0}
.dh{height:23px;background:#ececec;border-bottom:1px solid #ccc;border-radius:4px 4px 0 0;display:flex;align-items:center;padding:0 4px 0 5px}
.dh span{margin-right:auto}
.min{width:12px;height:2px;background:#888;margin-top:1px}
.tools{left:982px;width:264px;height:92px}
.tg{display:grid;grid-template-columns:repeat(9,28px);grid-auto-rows:28px;padding:8px 0 0 5px;place-items:center}
.tg svg{width:20px;height:20px;fill:none;stroke:#333;stroke-width:1.050}
.layers{left:1252px;width:247px;height:131px;background:#fff}
.layers .gr{margin:0 5px}
.lt{display:flex;height:25px;line-height:25px;text-align:center;padding-left:1px}
.lt b{width:35px;color:#3a68b0}
.lt span{background:#ddd;width:62px;border-right:1px solid #ccc}
.lt span:nth-child(3){width:86px}
.lt span:last-child{width:55px;border:0}
.lr{height:24px;display:flex;align-items:center;background:#ddd;margin:0 2px 0 1px}
.lr.w{background:#fff;margin-top:4px}
.lr i{width:32px;height:24px;margin-right:7px;display:flex;align-items:center;justify-content:center}
.ey{width:16px;height:12px;margin-right:9px}
.red{background:red}.blu{background:#00f}.yel{background:#fc0}.grn{background:#6c3}
.lr.part{height:5px}.lr.part i{height:5px}
.rz{margin-left:auto}

/* properties */
.props{width:198px;background:#ddd;display:flex;flex-direction:column;letter-spacing:.05px}
.so{height:30px;line-height:30px;padding-left:10px;display:flex;gap:20px}
.props h3{margin:0;height:30px;line-height:30px;background:#ececec;font-size:14px;font-weight:400;padding-left:20px;position:relative}
.props h3::before{content:"";position:absolute;left:8px;top:10px;border-left:8px solid transparent;border-bottom:8px solid #bbb}
.pr{height:30px;background:#fff;padding:3px 12px 0 10px;display:flex;justify-content:space-between}
.pr label{line-height:20px;white-space:nowrap}
.f{width:84px;height:25px;border:1px solid #ccc;line-height:24px;padding-left:6px;font-size:12.500px;color:#000;display:flex;border-radius:2px}
.f.s{padding-left:10px;font-size:13px}
.f.s::after{content:"";margin:7px 6px 0 auto;height:0;border:3px solid transparent;border-top:7px solid #000;border-bottom:0}
.f.blk{background:#000;color:#fff;font-weight:400;-webkit-text-stroke:.3px #fff}
.mouse{margin-top:10px;border-top:1px solid #ccc}
.mouse div{display:flex;height:24px;line-height:23px;background:#ececec;border-bottom:1px solid #ccc}
.mouse span:first-child{width:98px;padding-left:10px;border-right:1px solid #ccc}
.mouse span:last-child{padding-left:6px}
.status{position:absolute;left:0;bottom:0;width:156px;height:21px;background:#35373a;color:#b8bbbe;border-radius:0 4px 0 0;font:12px/20px "Open Sans","Noto Sans",sans-serif;padding-left:3px;letter-spacing:-.3px;white-space:nowrap;z-index:6}
```
FILE: board.js
```js
// Rulers, grid and drill pads of the board canvas.
(function () {
  var NS = 'http://www.w3.org/2000/svg';
  var ox = 303.5, oy = 446.5, mm = 5.515, step = 14;
  function add(parent, tag, attrs, text) {
    var el = document.createElementNS(NS, tag);
    for (var k in attrs) el.setAttribute(k, attrs[k]);
    if (text !== undefined) el.textContent = text;
    parent.appendChild(el);
    return el;
  }
  var grid = document.getElementById('grid'), d = '', i, p;
  for (i = -5; i < 101; i++) { p = Math.floor(ox + i * step) + 0.5; if (p < 1711) d += 'M' + p + ' 174V1040'; }
  for (i = -19; i < 43; i++) { p = Math.floor(oy + i * step) + 0.5; d += 'M228 ' + p + 'H1711'; }
  add(grid, 'path', { d: d });
  add(grid, 'path', { d: 'M303.5 174V1040M228 446.5H1711', style: 'stroke:#707070' });

  var ruler = document.getElementById('ruler'), r = '';
  for (i = -6; i <= 127; i++) {
    p = Math.round(ox - 0.5 + i * 2 * mm) + 0.5;
    r += 'M' + p + ' ' + (i % 10 === 0 ? 156 : i % 5 === 0 ? 162 : 168) + 'V173';
    if (i % 10 === 0) add(ruler, 'text', { x: p + 2, y: 165 }, i * 2);
  }
  for (i = -24; i <= 53; i++) {
    p = Math.round(oy - 0.5 + i * 2 * mm) + 0.5;
    r += 'M' + (i % 10 === 0 ? 210 : i % 5 === 0 ? 216 : 222) + ' ' + p + 'H227';
    if (i % 10 === 0) add(ruler, 'text', { transform: 'translate(211 ' + (p + 1.5) + ') rotate(90)' }, i * 2);
  }
  add(ruler, 'path', { d: r });

  var pads = [[398,180],[492,180],[648,232],[690,232],[398,310],[492,310],[585,342],[398,400],[492,400],[585,468],[398,568],[492,568],[753,342],[753,468],[869,279],[911,279],[953,279],[995,279],[869,405],[911,405],[953,405],[995,405],[1129,300],[1171,300],[1129,342],[1171,342],[1129,384],[1171,384],[1287,108],[1287,150],[1419,108],[1419,150],[1287,274],[1419,274],[1287,444],[1419,444]];
  document.querySelectorAll('.pads').forEach(function (g) {
    pads.forEach(function (c) { add(g, 'use', { href: '#pad', x: c[0], y: c[1] }); });
  });
})();
```
